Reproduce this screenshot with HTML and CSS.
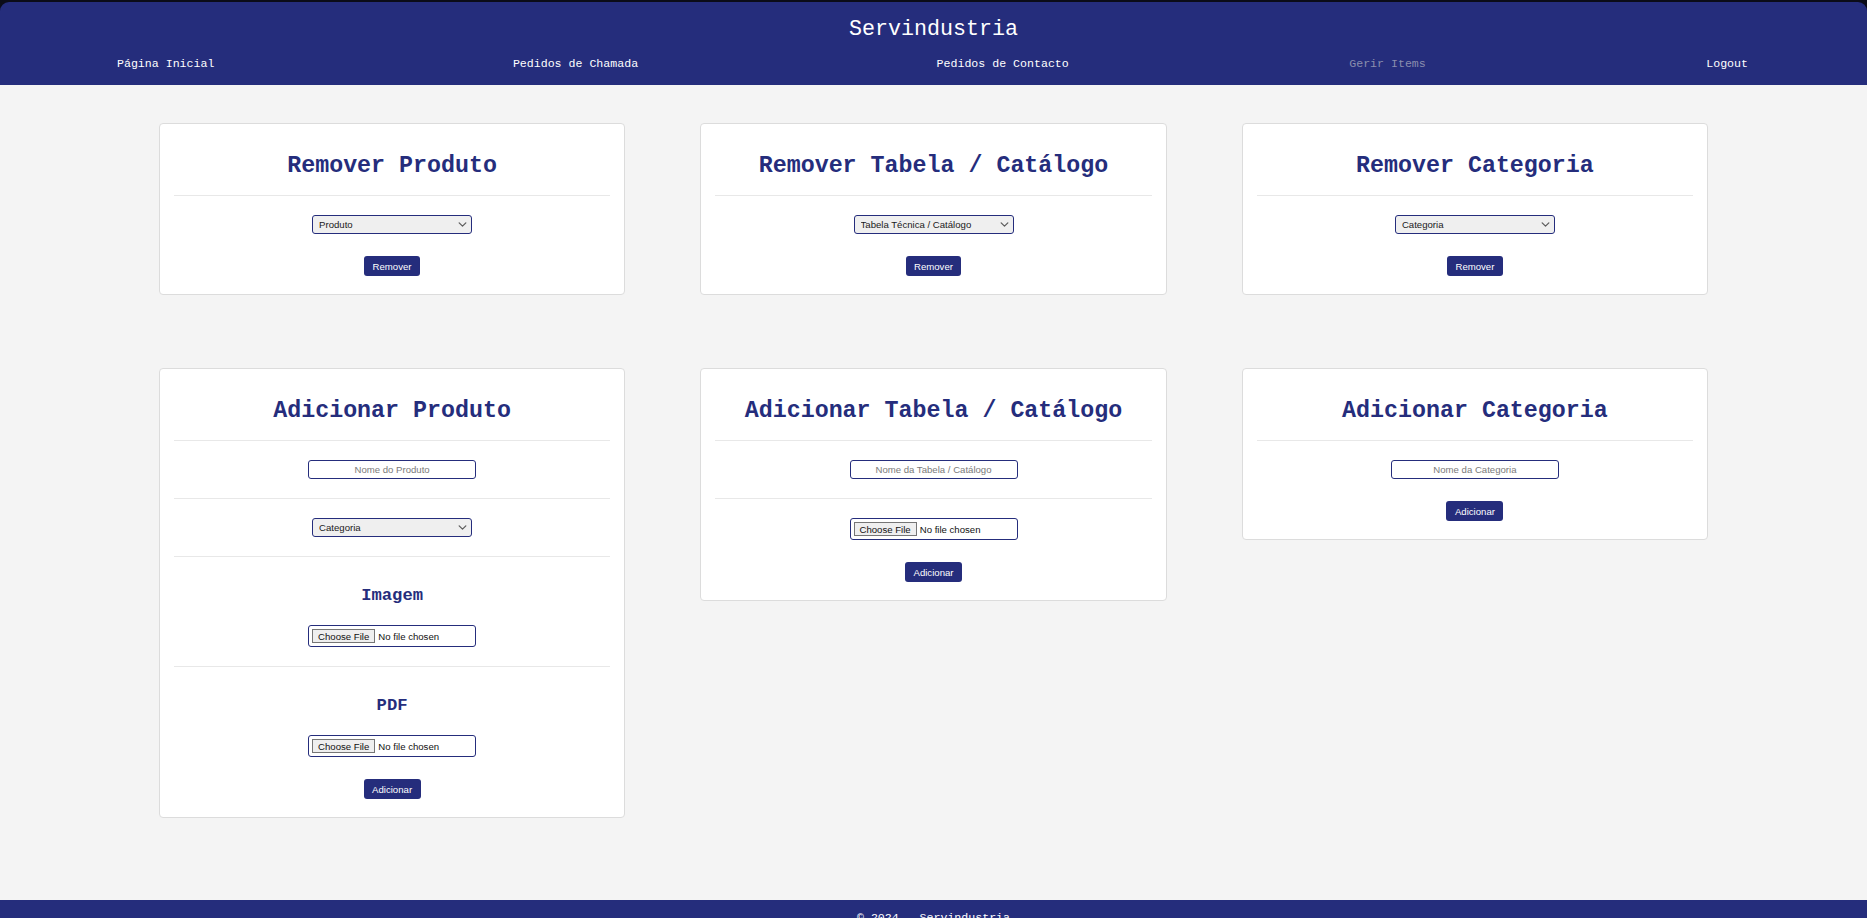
FILE: index.html
```html
<!DOCTYPE html>
<html lang="pt">
<head>
<meta charset="utf-8">
<title>Servindustria - Gerir Items</title>
<link rel="stylesheet" href="styles.css">
</head>
<body>
<header class="site-header">
  <h1 class="brand">Servindustria</h1>
  <nav class="main-nav">
    <a class="nav-link" href="#">Página Inicial</a>
    <a class="nav-link spaced" href="#">Pedidos de Chamada</a>
    <a class="nav-link spaced" href="#">Pedidos de Contacto</a>
    <a class="nav-link active" href="#">Gerir Items</a>
    <a class="nav-link" href="#">Logout</a>
  </nav>
</header>

<main class="content">
  <div class="card-grid">
    <section class="card">
      <h2 class="card-title">Remover Produto</h2>
      <div class="field last">
        <div class="select-wrap">
          <select class="ctl-select"><option>Produto</option></select>
          <svg class="chevron" viewBox="0 0 10 6" width="9" height="5"><path d="M1 1l4 4 4-4" fill="none" stroke="#5c5c5c" stroke-width="1.5" stroke-linecap="round" stroke-linejoin="round"/></svg>
        </div>
      </div>
      <div class="actions"><button class="btn" type="button">Remover</button></div>
    </section>

    <section class="card">
      <h2 class="card-title">Remover Tabela / Catálogo</h2>
      <div class="field last">
        <div class="select-wrap">
          <select class="ctl-select"><option>Tabela Técnica / Catálogo</option></select>
          <svg class="chevron" viewBox="0 0 10 6" width="9" height="5"><path d="M1 1l4 4 4-4" fill="none" stroke="#5c5c5c" stroke-width="1.5" stroke-linecap="round" stroke-linejoin="round"/></svg>
        </div>
      </div>
      <div class="actions"><button class="btn" type="button">Remover</button></div>
    </section>

    <section class="card">
      <h2 class="card-title">Remover Categoria</h2>
      <div class="field last">
        <div class="select-wrap">
          <select class="ctl-select"><option>Categoria</option></select>
          <svg class="chevron" viewBox="0 0 10 6" width="9" height="5"><path d="M1 1l4 4 4-4" fill="none" stroke="#5c5c5c" stroke-width="1.5" stroke-linecap="round" stroke-linejoin="round"/></svg>
        </div>
      </div>
      <div class="actions"><button class="btn" type="button">Remover</button></div>
    </section>

    <section class="card">
      <h2 class="card-title">Adicionar Produto</h2>
      <div class="field">
        <input class="ctl-text" type="text" placeholder="Nome do Produto">
      </div>
      <div class="field">
        <div class="select-wrap">
          <select class="ctl-select"><option>Categoria</option></select>
          <svg class="chevron" viewBox="0 0 10 6" width="9" height="5"><path d="M1 1l4 4 4-4" fill="none" stroke="#5c5c5c" stroke-width="1.5" stroke-linecap="round" stroke-linejoin="round"/></svg>
        </div>
      </div>
      <div class="field">
        <h3 class="field-title">Imagem</h3>
        <input class="ctl-file" type="file">
      </div>
      <div class="field last">
        <h3 class="field-title">PDF</h3>
        <input class="ctl-file" type="file">
      </div>
      <div class="actions"><button class="btn" type="button">Adicionar</button></div>
    </section>

    <section class="card">
      <h2 class="card-title">Adicionar Tabela / Catálogo</h2>
      <div class="field">
        <input class="ctl-text" type="text" placeholder="Nome da Tabela / Catálogo">
      </div>
      <div class="field last">
        <input class="ctl-file" type="file">
      </div>
      <div class="actions"><button class="btn" type="button">Adicionar</button></div>
    </section>

    <section class="card">
      <h2 class="card-title">Adicionar Categoria</h2>
      <div class="field last">
        <input class="ctl-text" type="text" placeholder="Nome da Categoria">
      </div>
      <div class="actions"><button class="btn" type="button">Adicionar</button></div>
    </section>
  </div>
</main>

<footer class="site-footer">
  <p class="copyright">© 2024 - Servindustria</p>
</footer>
</body>
</html>
```

FILE: styles.css
```css
html {
  background: #0b0c18;
  scrollbar-width: none;
}

::-webkit-scrollbar {
  display: none;
}

body {
  margin: 2px 0 0;
  background: #0b0c18;
  font-family: "Liberation Mono", "Courier New", monospace;
}

.site-header {
  background: #252d7c;
  border-radius: 9px 9px 0 0;
  padding: 15px 0 14px;
  color: #ffffff;
}

.brand {
  margin: 0;
  text-align: center;
  font-weight: normal;
  font-size: 21.7px;
  line-height: 25px;
  color: #ffffff;
}

.main-nav {
  margin-top: 15px;
  display: flex;
  justify-content: space-between;
  padding: 0 119px 0 117px;
}

.nav-link {
  font-size: 11.6px;
  line-height: 14px;
  color: #ffffff;
  text-decoration: none;
}

.nav-link.spaced {
  margin-left: 18px;
}

.nav-link.active {
  color: #8a8eae;
}

.content {
  background: #f4f4f4;
  padding: 38px 0 82px;
}

.card-grid {
  display: grid;
  grid-template-columns: repeat(3, 25%);
  column-gap: 4%;
  row-gap: 73px;
  justify-content: center;
  align-items: start;
}

.card {
  background: #ffffff;
  border: 1px solid #dcdcdc;
  border-radius: 4px;
  padding: 0 14px 18px;
  text-align: center;
}

.card-title {
  margin: 29px 0 16px;
  font-size: 23.3px;
  line-height: 26px;
  font-weight: bold;
  color: #252d7c;
}

.field {
  border-top: 1px solid #e8e8e8;
  padding: 19px 0;
  display: flex;
  flex-direction: column;
  align-items: center;
}

.field.last {
  padding-bottom: 0;
}

.field-title {
  margin: 10px 0 19px;
  font-size: 17.2px;
  line-height: 20px;
  font-weight: bold;
  color: #252d7c;
}

.ctl-select,
.ctl-text,
.ctl-file,
.btn {
  font-family: "Liberation Sans", Arial, sans-serif;
  font-size: 9.6px;
  box-sizing: border-box;
}

.select-wrap {
  position: relative;
  display: inline-block;
  width: 160px;
  height: 19px;
}

.ctl-select {
  appearance: none;
  -webkit-appearance: none;
  display: block;
  width: 160px;
  height: 19px;
  border: 1px solid #252d7c;
  border-radius: 3px;
  background-color: #efefef;
  color: #1a1a1a;
  padding: 0 18px 0 6px;
  margin: 0;
}

.chevron {
  position: absolute;
  right: 5px;
  top: 7px;
  pointer-events: none;
}

.ctl-text {
  width: 168px;
  height: 19px;
  border: 1px solid #252d7c;
  border-radius: 3px;
  background: #ffffff;
  text-align: center;
  padding: 0 4px;
  color: #222;
  margin: 0;
}

.ctl-text::placeholder {
  color: #7a7a7a;
}

.ctl-file {
  width: 168px;
  height: 22px;
  border: 1px solid #252d7c;
  border-radius: 3px;
  background: #ffffff;
  padding: 3px;
  color: #111;
  margin: 0;
}

.ctl-file::file-selector-button {
  font-family: "Liberation Sans", Arial, sans-serif;
  font-size: 9.6px;
  height: 14px;
  padding: 0 5px;
  margin-right: 3px;
  border: 1px solid #767676;
  border-radius: 0;
  background: #efefef;
  color: #111;
}

.actions {
  margin-top: 22px;
  display: flex;
  justify-content: center;
}

.btn {
  height: 20px;
  padding: 0 8.5px;
  border: none;
  border-radius: 3px;
  background: #252d7c;
  color: #ffffff;
  margin: 0;
}

.site-footer {
  background: #252d7c;
  padding: 11px 0;
}

.copyright {
  margin: 0;
  text-align: center;
  font-size: 11.6px;
  line-height: 14px;
  color: #ffffff;
}
```
